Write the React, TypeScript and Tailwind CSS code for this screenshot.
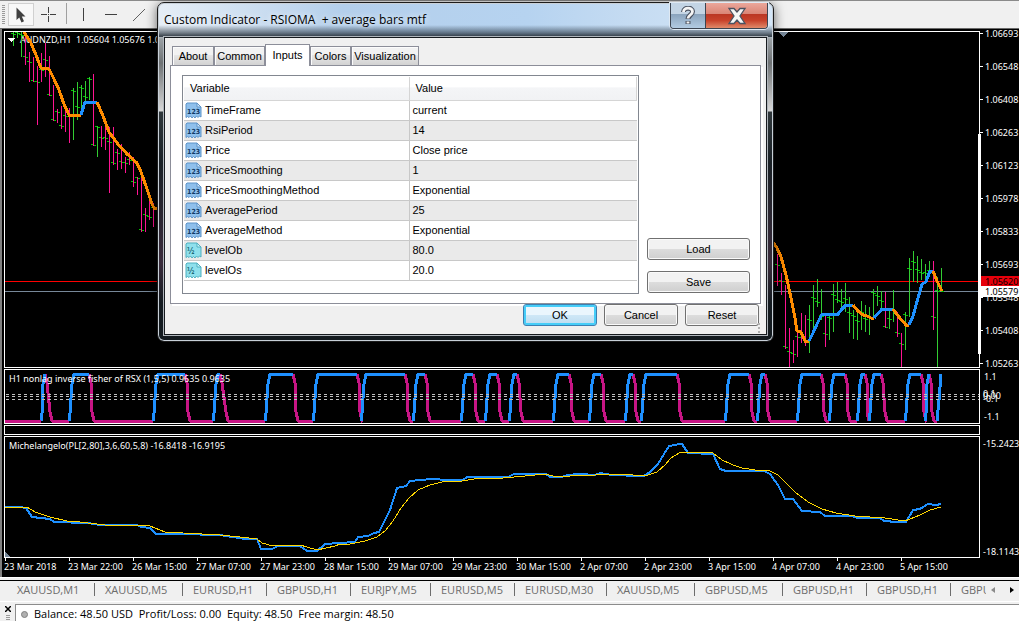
const BLUE = "#1e90ff";
const ORANGE = "#ff8c00";
const MAGENTA = "#c71585";

// x, high, low, close, direction (u = up, d = down)
type Bar = [number, number, number, number, "u" | "d"];

const bars: Bar[] = [
  [13, 32, 46, 34, "u"], [17, 32, 38, 33, "u"], [21, 32, 57, 35, "u"], [25, 32, 65, 57, "d"],
  [29, 52, 82, 62, "d"], [33, 57, 82, 81, "d"], [37, 66, 125, 82, "d"], [41, 53, 82, 70, "d"],
  [45, 43, 77, 60, "d"], [49, 56, 96, 95, "d"], [53, 85, 121, 120, "d"], [57, 109, 123, 112, "d"],
  [61, 106, 129, 126, "d"], [65, 107, 132, 116, "d"], [69, 108, 143, 115, "d"], [73, 88, 140, 91, "u"],
  [77, 82, 120, 107, "u"], [81, 85, 115, 88, "u"], [85, 81, 103, 97, "u"], [89, 77, 100, 79, "u"],
  [93, 74, 146, 145, "d"], [97, 126, 157, 127, "u"], [101, 126, 147, 138, "d"], [105, 127, 150, 138, "d"],
  [109, 127, 193, 142, "d"], [113, 127, 165, 163, "d"], [117, 149, 170, 153, "d"], [121, 144, 169, 162, "d"],
  [125, 157, 173, 163, "d"], [129, 152, 165, 160, "d"], [133, 157, 187, 182, "d"], [137, 177, 195, 178, "d"],
  [141, 170, 232, 230, "d"], [145, 208, 232, 215, "d"], [149, 200, 220, 217, "d"], [153, 203, 227, 208, "d"],
  [777, 254, 286, 265, "d"], [781, 273, 295, 281, "d"], [785, 285, 349, 347, "d"], [789, 328, 367, 352, "d"],
  [793, 340, 363, 354, "d"], [797, 327, 357, 337, "d"], [801, 313, 343, 338, "d"], [805, 315, 346, 340, "d"],
  [809, 305, 353, 320, "u"], [813, 285, 330, 298, "u"], [817, 279, 307, 302, "u"], [821, 289, 320, 316, "u"],
  [825, 314, 347, 334, "d"], [829, 313, 340, 318, "u"], [833, 284, 332, 295, "u"], [837, 282, 303, 300, "u"],
  [841, 289, 308, 302, "u"], [845, 283, 312, 299, "u"], [849, 297, 333, 313, "u"], [853, 310, 339, 316, "u"],
  [857, 311, 340, 321, "u"], [861, 301, 330, 312, "u"], [865, 305, 332, 319, "u"], [869, 307, 335, 317, "u"],
  [873, 289, 318, 293, "u"], [877, 286, 306, 296, "u"], [881, 291, 310, 301, "u"], [885, 292, 328, 327, "d"],
  [889, 308, 329, 319, "u"], [893, 290, 322, 310, "u"], [897, 312, 337, 333, "d"], [901, 333, 367, 344, "d"],
  [905, 312, 350, 315, "u"], [909, 258, 317, 269, "u"], [913, 251, 282, 262, "u"], [917, 256, 283, 270, "u"],
  [921, 259, 280, 273, "u"], [925, 264, 282, 273, "u"], [929, 261, 273, 271, "u"], [933, 261, 330, 317, "d"],
  [937, 277, 367, 291, "u"], [941, 268, 292, 291, "u"],
];

const priceLines = [
  { color: ORANGE, points: "24,32 31,43 36,55 41,68 49,69 54,79 59,90 64,104 69,115 81,115" },
  { color: BLUE, points: "81,115 85,102 97,102" },
  { color: ORANGE, points: "97,102 103,116 109,132 117,143 127,154 137,163 141,172 147,189 152,204 154,208 158,208" },
  { color: ORANGE, points: "773,242 777,248 781,257 786,275 791,298 795,318 797,331 801,332 805,341 809,341" },
  { color: BLUE, points: "809,341 813,333 818,322 822,314 838,314 842,309 846,305 853,305" },
  { color: ORANGE, points: "853,305 858,311 863,315 867,316 871,318 874,318" },
  { color: BLUE, points: "874,318 882,309 893,309" },
  { color: ORANGE, points: "893,309 899,317 906,325 909,325" },
  { color: BLUE, points: "909,325 913,316 918,298 922,284 926,282 930,271 933,271" },
  { color: ORANGE, points: "933,271 937,281 942,291" },
];

// start of rise, end of the high level, start of the next low level
const pulses: [number, number, number][] = [
  [41, 45, 51], [69, 89, 93], [153, 185, 189], [213, 220, 227], [265, 293, 297], [313, 357, 361],
  [361, 405, 409], [413, 425, 429], [461, 473, 477], [485, 497, 501], [509, 517, 522], [553, 569, 573],
  [589, 601, 605], [625, 633, 637], [641, 677, 681], [725, 749, 753], [757, 765, 769], [797, 821, 825],
  [829, 845, 849], [857, 865, 868], [869, 881, 886], [905, 921, 925], [925, 929, 933],
];

const slowLine =
  "5,508 20,507 27,507 35,512 50,517 67,521 80,522 105,525 137,525 150,526 165,532 220,535 240,537 257,539 262,543 273,546 300,545 317,550 335,546 340,544 350,544 365,541 377,537 385,531 393,521 401,508 409,498 418,490 430,485 442,482 462,481 480,478 503,478 525,476 545,474 553,476 570,476 595,475 620,474 645,476 657,472 665,465 671,458 679,453 686,452 713,453 722,460 733,465 742,468 755,470 770,471 778,475 786,483 795,492 808,502 822,509 836,513 855,516 885,518 905,521 920,515 930,510 941,507";
const fastLine =
  "5,507 20,507 26,508 32,517 50,519 54,522 88,523 100,525 137,525 141,527 150,528 156,534 178,534 220,535 245,539 257,539 261,549 272,549 278,546 300,546 307,551 317,551 325,544 340,543 355,542 358,537 368,536 374,533 379,532 390,510 397,488 406,486 410,481 420,480 432,479 448,480 463,480 467,477 508,477 514,474 546,474 550,477 562,477 567,475 580,474 595,475 600,473 612,475 624,475 628,476 644,476 650,472 658,464 664,454 669,446 675,445 679,444 682,444 688,453 713,454 720,469 726,471 764,471 770,474 778,485 785,499 793,499 802,511 820,512 825,516 852,516 857,518 880,518 884,521 897,522 906,522 913,510 920,509 928,504 936,505 941,504";

const priceLabels = [
  "1.06693", "1.06548", "1.06408", "1.06263", "1.06123", "1.05978",
  "1.05833", "1.05693", "1.05548", "1.05408", "1.05263",
];

const times = [
  "23 Mar 2018", "23 Mar 22:00", "26 Mar 15:00", "27 Mar 07:00", "27 Mar 23:00",
  "28 Mar 15:00", "29 Mar 07:00", "29 Mar 23:00", "30 Mar 15:00", "2 Apr 07:00",
  "2 Apr 23:00", "3 Apr 15:00", "4 Apr 07:00", "4 Apr 23:00", "5 Apr 15:00",
];

const chartTabs = [
  { name: "XAUUSD,M1", width: "w-[88px]" },
  { name: "XAUUSD,M5", width: "w-[88px]" },
  { name: "EURUSD,H1", width: "w-[84px]" },
  { name: "GBPUSD,H1", width: "w-[84px]" },
  { name: "EURJPY,M5", width: "w-[80px]" },
  { name: "EURUSD,M5", width: "w-[84px]" },
  { name: "EURUSD,M30", width: "w-[92px]" },
  { name: "XAUUSD,M5", width: "w-[88px]" },
  { name: "GBPUSD,M5", width: "w-[88px]" },
  { name: "GBPUSD,H1", width: "w-[84px]" },
  { name: "GBPUSD,H1", width: "w-[84px]" },
];

const inputs = [
  { name: "TimeFrame", value: "current", kind: "int" },
  { name: "RsiPeriod", value: "14", kind: "int" },
  { name: "Price", value: "Close price", kind: "int" },
  { name: "PriceSmoothing", value: "1", kind: "int" },
  { name: "PriceSmoothingMethod", value: "Exponential", kind: "int" },
  { name: "AveragePeriod", value: "25", kind: "int" },
  { name: "AverageMethod", value: "Exponential", kind: "int" },
  { name: "levelOb", value: "80.0", kind: "double" },
  { name: "levelOs", value: "20.0", kind: "double" },
];

export default function App() {
  return (
    <div className="relative flex min-h-screen flex-col overflow-hidden bg-[#f0f0f0] font-['Open_Sans',sans-serif]">
      <Toolbar />
      <main className="flex flex-col border-l-2 border-[#808080] bg-black pl-[2px] pt-[2px] font-['Noto_Sans',sans-serif] text-[9px] leading-[12px] text-white">
        <PricePane />
        <FisherPane />
        <div className="mt-px flex">
          <div className="h-[10px] flex-1 border border-white" />
          <div className="w-[39px]" />
        </div>
        <MichelangeloPane />
        <div className="flex h-[19px] overflow-hidden">
          {times.map((t) => (
            <span key={t} className="w-[64px] shrink-0 whitespace-nowrap">
              <span className="ml-px block h-[3px] w-px bg-white" />
              {t}
            </span>
          ))}
        </div>
      </main>
      <ChartTabs />
      <Terminal />
      <IndicatorDialog />
    </div>
  );
}

function Toolbar() {
  return (
    <div className="flex h-[29px] items-start border-b border-t border-b-[#696969] border-t-[#8a8a8a] bg-[#f0f0f0] pl-[2px] pt-[2px]">
      <svg width="4" height="22" className="mt-px" shapeRendering="crispEdges">
        <path d="M1.5 1V20" stroke="#9a9a9a" strokeWidth="3" strokeDasharray="1 1" />
      </svg>
      <button aria-label="Cursor" className="ml-[2px] flex h-[23px] w-[26px] items-center justify-center border border-[#d0d0d0] bg-[#f8f8f8]">
        <svg width="12" height="18" viewBox="0 0 12 18">
          <path d="M1.500 1.500V14L4.300 11.500L6.500 16.500L9 15.300L6.800 10.600H10.500Z" fill="#404040" />
        </svg>
      </button>
      <button aria-label="Crosshair" className="ml-[6px] flex h-[23px] w-[18px] items-center justify-center">
        <svg width="16" height="16" viewBox="0 0 16 16" shapeRendering="crispEdges">
          <path d="M7.500 0V6M7.500 9V15M0 7.500H6M9 7.500H15M7 7.500H8" stroke="#404040" fill="none" />
        </svg>
      </button>
      <span className="ml-[8px] h-[21px] w-px bg-[#a0a0a0]" />
      <button aria-label="Vertical line" className="ml-[8px] flex h-[23px] w-[16px] items-center justify-center">
        <span className="h-[13px] w-px bg-[#404040]" />
      </button>
      <button aria-label="Horizontal line" className="ml-[12px] flex h-[23px] w-[16px] items-center justify-center">
        <span className="h-px w-[12px] bg-[#404040]" />
      </button>
      <button aria-label="Trendline" className="ml-[12px] flex h-[23px] w-[16px] items-center justify-center">
        <svg width="14" height="14" viewBox="0 0 14 14">
          <path d="M1 13L13 1" stroke="#606060" />
        </svg>
      </button>
    </div>
  );
}

function PricePane() {
  return (
    <div className="flex h-[337px]">
      <div className="relative h-full min-w-0 flex-1 overflow-hidden border border-white">
        <p className="absolute left-[15px] top-[2px] whitespace-pre">AUDNZD,H1  1.05604 1.05676 1.05579 1.05579</p>
        <svg width="974" height="335" viewBox="5 32 974 335" shapeRendering="crispEdges" className="relative block max-w-none">
          <path d="M5 281.500H979" stroke="#ff0000" />
          <path d="M5 291.500H979" stroke="#778899" />
          {bars.map(([x, high, low, close, dir]) => (
            <g key={x}>
              <path d={`M${x + 0.5} ${high}V${low}`} stroke={dir === "u" ? "#32cd32" : "#ff1493"} />
              <path d={`M${x - 2} ${close - 0.5}H${x}M${x + 1} ${close + 0.5}H${x + 3}`} stroke="#00c800" />
            </g>
          ))}
          {priceLines.map((l) => (
            <polyline key={l.points} points={l.points} stroke={l.color} strokeWidth="3" fill="none" />
          ))}
          <path d="M7 37.500H16L11.500 42Z" fill="#fff" />
          <path d="M778 32H788L783 37Z" fill="#778899" />
        </svg>
      </div>
      <div className="relative w-[39px]">
        <div className="absolute -left-[2px] top-[103px] h-[220px] w-[3px] bg-white" />
        <ul className="-mt-[4px]">
          {priceLabels.map((p) => (
            <li key={p} className="flex h-[33px] items-start pt-px">
              <span className="mr-[2px] mt-[5px] h-px w-[3px] bg-white" />
              {p}
            </li>
          ))}
        </ul>
        <span className="absolute left-px right-0 top-[245px] h-[10px] bg-red-600 pl-[4px] leading-[11px] text-black">1.05620</span>
        <span className="absolute left-px right-0 top-[255px] h-[11px] bg-white pl-[4px] leading-[11px] text-black">1.05579</span>
      </div>
    </div>
  );
}

function FisherPane() {
  const top = 374;
  const base = 421;
  return (
    <div className="mt-px flex">
      <div className="relative h-[55px] min-w-0 flex-1 overflow-hidden border border-white">
        <svg width="974" height="53" viewBox="5 370 974 53" shapeRendering="crispEdges" className="block max-w-none">
          {pulses.map(([rise, end, low], i) => {
            const next = pulses[i + 1]?.[0];
            const peak = Math.min(rise + 5, end);
            return (
              <g key={rise} fill="none" strokeWidth="3" strokeLinejoin="bevel">
                <polyline
                  stroke={MAGENTA}
                  points={`${end},${top} ${end + 2},${top + 9} ${low - 1},${base - 9} ${low + 1},${base} ${Math.max(next ?? 937, low)},${base}`}
                />
                <polyline
                  stroke={BLUE}
                  points={`${rise},${base} ${rise + 1},${base - 8} ${peak - 2},${top + 10} ${peak},${top} ${end},${top}`}
                />
              </g>
            );
          })}
          <path d={`M5 ${base}H41`} stroke={MAGENTA} strokeWidth="3" />
          <polyline points={`937,${base} 939,400 941,374`} stroke={BLUE} strokeWidth="3" fill="none" />
          <path d="M6 394.500H979M6 396.500H979M6 399.500H979" stroke="#c0c0c0" strokeDasharray="3 3" />
        </svg>
        <p className="absolute left-[4px] top-[3px] whitespace-nowrap">H1 nonlag inverse fisher of RSX (1,5,5) 0.9635 0.9635</p>
      </div>
      <div className="relative w-[39px] pl-[4px]">
        <p className="pt-[2px]">1.1</p>
        <p className="absolute left-[3px] top-[19px]">0.1</p>
        <p className="absolute left-[3px] top-[21px]">0.00</p>
        <p className="absolute left-[3px] top-[24px]">-0.1</p>
        <p className="pt-[28px]">-1.1</p>
      </div>
    </div>
  );
}

function MichelangeloPane() {
  return (
    <div className="mt-px flex">
      <div className="relative h-[122px] min-w-0 flex-1 overflow-hidden border border-white">
        <svg width="974" height="120" viewBox="5 437 974 120" shapeRendering="crispEdges" className="block max-w-none">
          <polyline points={fastLine} stroke={BLUE} strokeWidth="2" fill="none" />
          <polyline points={slowLine} stroke="#ffd700" fill="none" />
          <path d="M5 552L10 557H5Z" fill="#778899" />
        </svg>
        <p className="absolute left-[4px] top-[3px] whitespace-nowrap">Michelangelo(PL[2,80],3,6,60,5,8) -16.8418 -16.9195</p>
      </div>
      <div className="flex w-[39px] flex-col justify-between whitespace-nowrap pl-[3px] pt-[2px]">
        <p>-15.2423</p>
        <p>-18.1143</p>
      </div>
    </div>
  );
}

function ChartTabs() {
  return (
    <nav className="flex h-[24px] items-center border-t border-white bg-[#f0f0f0] text-[11px] text-[#6d6d6d] shadow-[inset_0_2px_0_#f0f0f0,inset_0_3px_0_#000]">
      <div className="flex min-w-0 flex-1 overflow-hidden pl-[7px]">
        {chartTabs.map((t, i) => (
          <button key={i} className={`${t.width} flex shrink-0 items-center justify-between pl-[10px] leading-[15px]`}>
            {t.name}
            <span className="h-[13px] w-px bg-[#6d6d6d]" />
          </button>
        ))}
        <button className="w-[36px] shrink-0 overflow-hidden pl-[10px] text-left leading-[15px]">GBPUSD,M1</button>
      </div>
      <button aria-label="Scroll left" className="px-[5px]">
        <svg width="4" height="6"><path d="M4 0V6L0 3Z" fill="#8a8a8a" /></svg>
      </button>
      <button aria-label="Scroll right" className="pl-[10px] pr-[5px]">
        <svg width="4" height="6"><path d="M0 0V6L4 3Z" fill="#000" /></svg>
      </button>
    </nav>
  );
}

function Terminal() {
  return (
    <div className="flex flex-1 border-t border-white bg-[#f0f0f0] pt-[2px]">
      <div className="flex w-[15px] flex-col items-center pt-[2px]">
        <button aria-label="Close" className="leading-none">
          <svg width="6" height="6" viewBox="0 0 6 6"><path d="M0 0L6 6M6 0L0 6" stroke="#000" strokeWidth="1.500" /></svg>
        </button>
        <svg width="4" height="6" className="mt-[3px]" shapeRendering="crispEdges">
          <path d="M2 0V6" stroke="#9a9a9a" strokeWidth="4" strokeDasharray="1 1" />
        </svg>
      </div>
      <div className="flex flex-1 items-center gap-[6px] border-l border-t border-[#8c8c8c] bg-white pl-[5px] pt-[2px] text-[11px] leading-[14px] text-black">
        <span className="size-[7px] rounded-full border border-[#808080] bg-[#b0b0b0]" />
        <p className="whitespace-pre">Balance: 48.50 USD  Profit/Loss: 0.00  Equity: 48.50  Free margin: 48.50</p>
      </div>
    </div>
  );
}

function IndicatorDialog() {
  return (
    <div
      role="dialog"
      aria-label="Custom Indicator"
      className="absolute left-[157px] top-[2px] w-[617px] rounded-[7px] border border-[#1c1c1c] bg-[linear-gradient(to_bottom,transparent_30px,#9aa0a4_36px,#6e7274_60px,#d8d8d8_108px,#30383c_109px,#1a2126_160px,#3a2c3c_260px,#141b20_300px),linear-gradient(to_right,#e6eef6,#b4cfeb_30%,#b6d3f0_60%,#c6dcf2_78%,#d4e6f8)] p-[6px] pt-0 shadow-[inset_0_0_0_1px_#c8d0d8,0_2px_12px_rgba(0,0,0,0.6)]"
    >
      <div className="mx-[-5px] flex h-[34px] items-start justify-between bg-[linear-gradient(to_bottom,transparent_22px,rgba(20,30,40,0.75)_33px)] pl-[5px] pr-[4px] font-['Open_Sans',sans-serif] text-[12px] text-black">
        <h1 className="mt-[8px] whitespace-pre leading-[17px] [text-shadow:0_0_6px_#fff]">Custom Indicator - RSIOMA  + average bars mtf</h1>
        <div className="flex h-[26px] w-[98px] overflow-hidden rounded-b-[4px] border border-t-0 border-[#3c4450] shadow-[0_0_0_1px_#dfe9f3]">
          <button aria-label="Help" className="flex flex-1 items-center justify-center border-r border-[#3c4450] bg-[linear-gradient(to_bottom,#c3d4e4_45%,#8ba4bd_46%,#b2cbe2)]">
            <svg width="14" height="20" viewBox="0 0 14 20">
              <path d="M2.500 6C2.500 1 11.500 1 11.500 5.500C11.500 9 7 9 7 13M7 15V18" fill="none" stroke="#4b5260" strokeWidth="5" />
              <path d="M2.500 6C2.500 1 11.500 1 11.500 5.500C11.500 9 7 9 7 12.500M7 15.500V17.500" fill="none" stroke="#f4f4f4" strokeWidth="2.800" />
            </svg>
          </button>
          <button aria-label="Close dialog" className="flex w-[61px] items-center justify-center bg-[linear-gradient(to_bottom,#eba79b,#d98475_45%,#bb3724_46%,#c8432c_70%,#e08a6a)]">
            <svg width="20" height="18" viewBox="0 0 20 18">
              <path d="M2 1.500H7L10 5L13 1.500H18L13 9L18 16.500H13L10 13L7 16.500H2L7 9Z" fill="#f6f6f6" stroke="#4b5260" strokeWidth="1.300" />
            </svg>
          </button>
        </div>
      </div>

      <div className="flex flex-col border border-[#161a1e] bg-[#f0f0f0] px-[5px] pb-[8px] pt-[6px] font-['Liberation_Sans',Arial,sans-serif] text-[11px] leading-[14px] text-black shadow-[0_0_0_1px_#b0b6bc]">
        <div role="tablist" className="flex h-[21px] items-end pl-[2px]">
          <Tab label="About" width="w-[42px]" />
          <Tab label="Common" width="w-[51px]" />
          <Tab label="Inputs" width="w-[45px]" active />
          <Tab label="Colors" width="w-[41px]" />
          <Tab label="Visualization" width="w-[68px]" />
        </div>
        <div className="flex items-end justify-between border border-[#8c8e99] bg-white py-[9px] pl-[11px] pr-[10px] shadow-[2px_2px_0_#fff]">
          <div className="h-[219px] w-[457px] border border-[#828790] px-px pt-px">
            <table className="w-full table-fixed border-collapse text-left">
              <thead>
                <tr className="h-[23px] bg-[linear-gradient(to_bottom,#fff_45%,#f4f5f7_46%,#f1f2f4)]">
                  <th className="w-[225px] border-b border-r border-[#d5d5d5] pl-[6px] font-normal">Variable</th>
                  <th className="border-b border-r border-[#d5d5d5] pl-[6px] font-normal">Value</th>
                </tr>
              </thead>
              <tbody>
                {inputs.map((row) => (
                  <tr key={row.name} className="h-[20px] even:bg-[#eaeaea]">
                    <td className="border-b border-r border-[#c8c8c8] p-0">
                      <span className="flex items-center gap-[3px] pl-px">
                        <ParamIcon kind={row.kind} />
                        {row.name}
                      </span>
                    </td>
                    <td className="border-b border-[#c8c8c8] p-0 pl-[3px]">{row.value}</td>
                  </tr>
                ))}
              </tbody>
            </table>
          </div>
          <div className="flex flex-col gap-[11px] pb-px">
            <DialogButton label="Load" width="w-[103px]" />
            <DialogButton label="Save" width="w-[103px]" />
          </div>
        </div>
        <div className="relative flex justify-end gap-[7px] pr-[2px]">
          <DialogButton label="OK" width="w-[74px]" primary />
          <DialogButton label="Cancel" width="w-[74px]" />
          <DialogButton label="Reset" width="w-[74px]" />
          <svg width="3" height="10" className="absolute -bottom-[7px] right-0" shapeRendering="crispEdges">
            <path d="M1 0V10" stroke="#b0b0b0" strokeWidth="2" strokeDasharray="2 2" />
          </svg>
        </div>
      </div>
    </div>
  );
}

function Tab({ label, width, active }: { label: string; width: string; active?: boolean }) {
  return (
    <button
      role="tab"
      aria-selected={!!active}
      className={
        active
          ? `${width} relative -mb-px h-[22px] border border-b-0 border-[#8c8e99] bg-white pb-[2px]`
          : `${width} h-[19px] border border-b-0 border-[#8c8e99] bg-[linear-gradient(to_bottom,#f2f2f2_45%,#e6e6e6_46%,#d2d2d2)] shadow-[inset_1px_1px_0_#fcfcfc]`
      }
    >
      {label}
    </button>
  );
}

function DialogButton({ label, width, primary }: { label: string; width: string; primary?: boolean }) {
  return (
    <button
      className={`${width} h-[22px] rounded-[3px] border ${
        primary
          ? "border-[#3c7fb1] bg-[linear-gradient(to_bottom,#eaf6fd_48%,#cfe8f7_49%,#bcdcf0)] shadow-[inset_0_0_0_2px_#45cdf8]"
          : "border-[#707070] bg-[linear-gradient(to_bottom,#f2f2f2_48%,#dddddd_49%,#cfcfcf)] shadow-[inset_0_0_0_1px_#fafafa]"
      }`}
    >
      {label}
    </button>
  );
}

function ParamIcon({ kind }: { kind: string }) {
  const isInt = kind === "int";
  return (
    <svg width="17" height="17" viewBox="0 0 17 17" className="shrink-0">
      <path
        d="M2 1H12L16 5V15L14.500 14L13 15.500L11.500 14L10 16L8.500 14.500L7 16L5.500 14L4 15.500L2.500 14.500L1 15.500V2Z"
        fill={isInt ? "#8fc0ec" : "#8fe0ec"}
        stroke={isInt ? "#5d93c8" : "#4fb0c0"}
      />
      <path d="M12 1V5H16Z" fill={isInt ? "#d4e8fa" : "#d0f6fa"} stroke={isInt ? "#5d93c8" : "#4fb0c0"} />
      <text x="2" y="12" fontSize={isInt ? 7 : 8} fontWeight="bold" fontFamily="DejaVu Sans Condensed, sans-serif" fill={isInt ? "#123a66" : "#1a6a78"}>
        {isInt ? "123" : "½"}
      </text>
    </svg>
  );
}
